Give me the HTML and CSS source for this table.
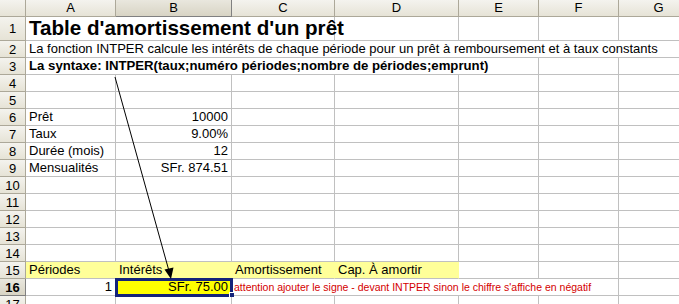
FILE: index.html
```html
<!DOCTYPE html>
<html lang="fr">
<head>
<meta charset="utf-8">
<title>Table d'amortissement</title>
<link rel="stylesheet" href="styles.css">
</head>
<body>
<div class="sheet">
  <!-- column headers -->
  <div class="h corner"></div>
  <div class="h col">A</div>
  <div class="h col sel">B</div>
  <div class="h col">C</div>
  <div class="h col">D</div>
  <div class="h col">E</div>
  <div class="h col">F</div>
  <div class="h col">G</div>

  <!-- row 1 -->
  <div class="h row">1</div>
  <div class="c title span3">Table d'amortissement d'un prêt</div>
  <div class="c"></div><div class="c"></div><div class="c"></div><div class="c"></div>

  <!-- row 2 -->
  <div class="h row">2</div>
  <div class="c span7">La fonction INTPER calcule les intérêts de chaque période pour un prêt à remboursement et à taux constants</div>

  <!-- row 3 -->
  <div class="h row">3</div>
  <div class="c bold span5">La syntaxe: INTPER(taux;numéro périodes;nombre de périodes;emprunt)</div>
  <div class="c"></div><div class="c"></div>

  <!-- row 4 -->
  <div class="h row">4</div>
  <div class="c"></div><div class="c"></div><div class="c"></div><div class="c"></div><div class="c"></div><div class="c"></div><div class="c"></div>

  <!-- row 5 -->
  <div class="h row">5</div>
  <div class="c"></div><div class="c"></div><div class="c"></div><div class="c"></div><div class="c"></div><div class="c"></div><div class="c"></div>

  <!-- row 6 -->
  <div class="h row">6</div>
  <div class="c">Prêt</div><div class="c num">10000</div>
  <div class="c"></div><div class="c"></div><div class="c"></div><div class="c"></div><div class="c"></div>

  <!-- row 7 -->
  <div class="h row">7</div>
  <div class="c">Taux</div><div class="c num">9.00%</div>
  <div class="c"></div><div class="c"></div><div class="c"></div><div class="c"></div><div class="c"></div>

  <!-- row 8 -->
  <div class="h row">8</div>
  <div class="c">Durée (mois)</div><div class="c num">12</div>
  <div class="c"></div><div class="c"></div><div class="c"></div><div class="c"></div><div class="c"></div>

  <!-- row 9 -->
  <div class="h row">9</div>
  <div class="c">Mensualités</div><div class="c num">SFr. 874.51</div>
  <div class="c"></div><div class="c"></div><div class="c"></div><div class="c"></div><div class="c"></div>

  <!-- rows 10-14 -->
  <div class="h row">10</div>
  <div class="c"></div><div class="c"></div><div class="c"></div><div class="c"></div><div class="c"></div><div class="c"></div><div class="c"></div>
  <div class="h row">11</div>
  <div class="c"></div><div class="c"></div><div class="c"></div><div class="c"></div><div class="c"></div><div class="c"></div><div class="c"></div>
  <div class="h row">12</div>
  <div class="c"></div><div class="c"></div><div class="c"></div><div class="c"></div><div class="c"></div><div class="c"></div><div class="c"></div>
  <div class="h row">13</div>
  <div class="c"></div><div class="c"></div><div class="c"></div><div class="c"></div><div class="c"></div><div class="c"></div><div class="c"></div>
  <div class="h row">14</div>
  <div class="c"></div><div class="c"></div><div class="c"></div><div class="c"></div><div class="c"></div><div class="c"></div><div class="c"></div>

  <!-- row 15 -->
  <div class="h row">15</div>
  <div class="c hl">Périodes</div>
  <div class="c hl">Intérêts</div>
  <div class="c hl">Amortissement</div>
  <div class="c hl">Cap. À amortir</div>
  <div class="c"></div><div class="c"></div><div class="c"></div>

  <!-- row 16 -->
  <div class="h row sel">16</div>
  <div class="c num">1</div>
  <div class="c num active">SFr. 75.00</div>
  <div class="c note span4">attention ajouter le signe - devant INTPER sinon le chiffre s'affiche en négatif</div>
  <div class="c"></div>

  <!-- row 17 -->
  <div class="h row">17</div>
  <div class="c"></div><div class="c"></div><div class="c"></div><div class="c"></div><div class="c"></div><div class="c"></div><div class="c"></div>
</div>

<svg class="arrow" width="679" height="304" viewBox="0 0 679 304" aria-hidden="true">
  <line x1="115" y1="77" x2="169" y2="271" stroke="#000" stroke-width="1"/>
  <polygon points="171,279 164.5,269.5 173.5,267.5" fill="#000"/>
</svg>
</body>
</html>
```
FILE: styles.css
```css
html, body {
  margin: 0;
  padding: 0;
  background: #ffffff;
}

body {
  position: relative;
  width: 679px;
  height: 304px;
  overflow: hidden;
  font-family: "Liberation Sans", Arial, sans-serif;
  font-size: 13px;
  color: #000;
}

.sheet {
  display: grid;
  grid-template-columns: 26px 90px 116px 103px 124px 80px 80px 80px;
  grid-template-rows: 17px 24px repeat(16, 17px);
  width: 699px;
}

.h {
  box-sizing: border-box;
  background: linear-gradient(#f4f3ee, #e6e3d6);
  border-right: 1px solid #aca899;
  border-bottom: 1px solid #aca899;
  display: flex;
  align-items: center;
  justify-content: center;
  font-size: 13px;
  line-height: 16px;
  color: #000;
}

.h.row {
  padding-top: 1px;
}

.h.sel {
  background: linear-gradient(#e9e7de, #d8d4c4);
  border-right: 1px solid #808080;
  border-bottom: 1px solid #808080;
  font-weight: bold;
}

.h.col.sel {
  font-weight: normal;
}

.c {
  box-sizing: border-box;
  border-right: 1px solid #c0c0c0;
  border-bottom: 1px solid #c0c0c0;
  display: flex;
  align-items: flex-end;
  padding: 0 3px 0 3px;
  white-space: nowrap;
  line-height: 16px;
  min-width: 0;
}

.span3 { grid-column: span 3; }
.span4 { grid-column: span 4; }
.span5 { grid-column: span 5; }
.span7 { grid-column: span 7; }

.title {
  font-size: 20.6px;
  font-weight: bold;
  line-height: 22px;
  padding-bottom: 1px;
}

.bold {
  font-weight: bold;
  font-size: 13.2px;
}

.num {
  justify-content: flex-end;
}

.hl {
  background: #ffff99;
  border-right-color: #ffff99;
}

.active {
  position: relative;
  background: #ffff00;
  outline: 3px solid #14237a;
  outline-offset: -2px;
  padding-right: 3px;
}

.active::after {
  content: "";
  position: absolute;
  right: -3px;
  bottom: -2px;
  width: 5px;
  height: 5px;
  background: #14237a;
  border-left: 1px solid #fff;
  border-top: 1px solid #fff;
  box-sizing: border-box;
}

.note {
  color: #d40000;
  font-size: 10.5px;
  padding-left: 2px;
  line-height: 15px;
}

.arrow {
  position: absolute;
  left: 0;
  top: 0;
  pointer-events: none;
}
```
